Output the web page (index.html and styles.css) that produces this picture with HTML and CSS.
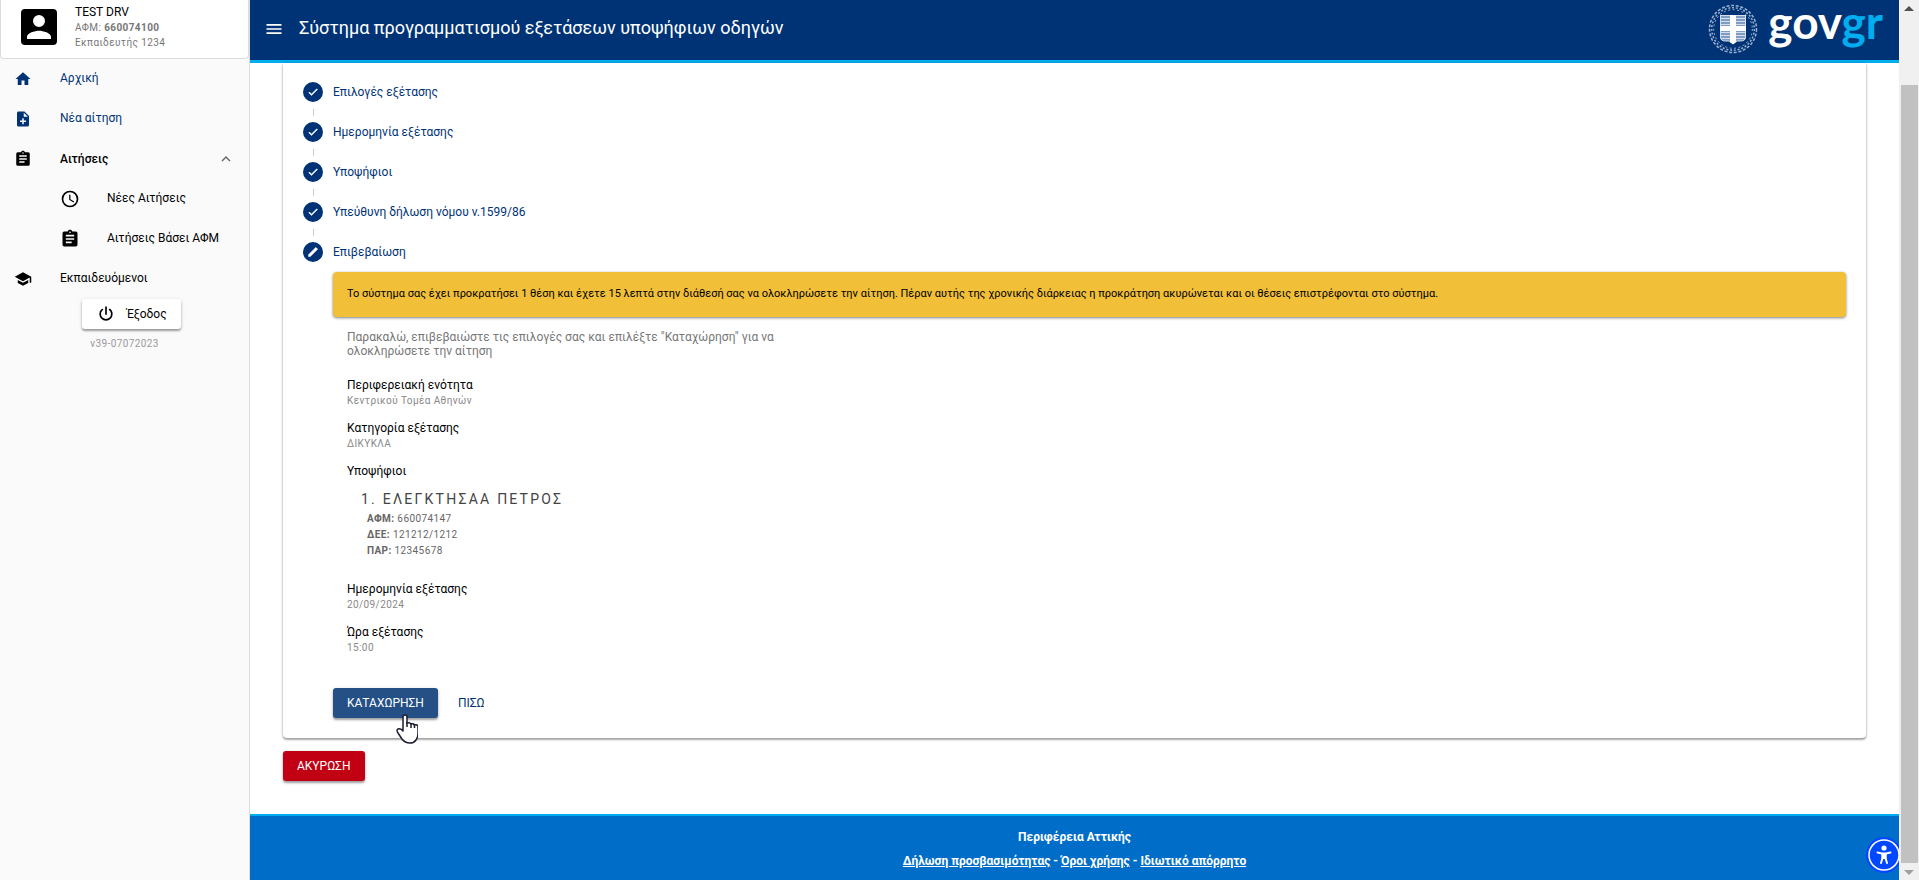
FILE: index.html
```html
<!DOCTYPE html>
<html lang="el">
    <head>
        <meta charset="utf-8">
        <title>Σύστημα προγραμματισμού εξετάσεων υποψήφιων οδηγών</title>
        <link rel="stylesheet" href="styles.css">
    </head>
    <body>
        <!-- shared icons -->
        <svg class="iconDefs" aria-hidden="true">
            <symbol id="check" viewBox="0 0 24 24"><path d="M21 7L9 19l-5.500-5.500 1.410-1.410L9 16.170 19.590 5.590z"/></symbol>
            <symbol id="clipboard" viewBox="0 0 24 24"><path d="M17 9H7V7h10m0 6H7v-2h10m-3 6H7v-2h7M12 3a1 1 0 0 1 1 1 1 1 0 0 1-1 1 1 1 0 0 1-1-1 1 1 0 0 1 1-1m7 0h-4.180C14.400 1.840 13.300 1 12 1s-2.400.84-2.820 2H5a2 2 0 0 0-2 2v14a2 2 0 0 0 2 2h14a2 2 0 0 0 2-2V5a2 2 0 0 0-2-2z"/></symbol>
        </svg>

        <aside class="sidebar">
            <div class="userCard">
                <svg class="avatar" viewBox="0 0 24 24"><path d="M6 17c0-2 4-3.100 6-3.100s6 1.100 6 3.100v1H6m9-9a3 3 0 0 1-3 3 3 3 0 0 1-3-3 3 3 0 0 1 3-3 3 3 0 0 1 3 3M3 5v14a2 2 0 0 0 2 2h14a2 2 0 0 0 2-2V5a2 2 0 0 0-2-2H5a2 2 0 0 0-2 2z"/></svg>
                <div>
                    <div class="userName">TEST DRV</div>
                    <div class="caption">ΑΦΜ: <b>660074100</b></div>
                    <div class="caption">Εκπαιδευτής 1234</div>
                </div>
            </div>

            <nav class="menu">
                <a href="#" class="menuItem blue">
                    <svg viewBox="0 0 24 24"><path d="M10 20v-6h4v6h5v-8h3L12 3 2 12h3v8z"/></svg>
                    <span>Αρχική</span>
                </a>
                <a href="#" class="menuItem blue">
                    <svg viewBox="0 0 24 24"><path d="M13 9h5.500L13 3.500V9M6 2h8l6 6v12a2 2 0 0 1-2 2H6a2 2 0 0 1-2-2V4c0-1.110.89-2 2-2m5 9v3H8v2h3v3h2v-3h3v-2h-3v-3z"/></svg>
                    <span>Νέα αίτηση</span>
                </a>
                <a href="#" class="menuItem group">
                    <svg viewBox="0 0 24 24"><use href="#clipboard"/></svg>
                    <span>Αιτήσεις</span>
                    <svg class="chevron" viewBox="0 0 24 24"><path d="M7.410 15.410L12 10.830l4.590 4.580L18 14l-6-6-6 6z"/></svg>
                </a>
                <a href="#" class="menuItem sub">
                    <svg viewBox="0 0 24 24"><path d="M12 20a8 8 0 0 0 8-8 8 8 0 0 0-8-8 8 8 0 0 0-8 8 8 8 0 0 0 8 8m0-18a10 10 0 0 1 10 10 10 10 0 0 1-10 10A10 10 0 0 1 2 12 10 10 0 0 1 12 2m.5 5v5.250l4.500 2.670-.75 1.230L11 13V7z"/></svg>
                    <span>Νέες Αιτήσεις</span>
                </a>
                <a href="#" class="menuItem sub">
                    <svg viewBox="0 0 24 24"><use href="#clipboard"/></svg>
                    <span>Αιτήσεις Βάσει ΑΦΜ</span>
                </a>
                <a href="#" class="menuItem">
                    <svg viewBox="0 0 24 24"><path d="M12 3L1 9l11 6 9-4.910V17h2V9M5 13.180v4L12 21l7-3.820v-4L12 17z"/></svg>
                    <span>Εκπαιδευόμενοι</span>
                </a>
            </nav>

            <div class="logout">
                <button type="button" class="btn logoutBtn">
                    <svg viewBox="0 0 24 24"><path d="M16.560 5.440l-1.450 1.450A5.970 5.970 0 0 1 18 12a6 6 0 0 1-6 6 6 6 0 0 1-6-6c0-2.170 1.160-4.060 2.880-5.120L7.440 5.440A7.960 7.960 0 0 0 4 12a8 8 0 0 0 8 8 8 8 0 0 0 8-8c0-2.720-1.360-5.120-3.440-6.560M13 3h-2v10h2"/></svg>
                    Έξοδος
                </button>
                <div class="version">v39-07072023</div>
            </div>
        </aside>

        <div class="page">
            <header class="topBar">
                <button type="button" class="burger" aria-label="Μενού">
                    <svg viewBox="0 0 24 24"><path d="M3 6h18v2H3V6m0 5h18v2H3v-2m0 5h18v2H3z"/></svg>
                </button>
                <h1>Σύστημα προγραμματισμού εξετάσεων υποψήφιων οδηγών</h1>
                <a href="#" class="logo">
                    <svg class="emblem" viewBox="0 0 50 50">
                        <g fill="none" stroke="#9db2d0">
                            <circle cx="25" cy="25" r="23.500" stroke-width="1.500" stroke-dasharray="3 1.700"/>
                            <circle cx="25" cy="25" r="21.300" stroke-width="1.500" stroke-dasharray="2 1.800"/>
                            <circle cx="25" cy="25" r="19.300" stroke-width="1" stroke-dasharray="2 2.500"/>
                        </g>
                        <path fill="#7f9dc4" d="M12 11h26v22q0 4-5 4h-4l-4 3-4-3h-4q-5 0-5-4z"/>
                        <path stroke="#d5deea" fill="none" d="M12 11.500h26M12 14.500h26M12 17.500h26M12 20.500h26M12 28.500h26M12 31.500h26M13 34.500h24M12.500 11v22q0 4 5 4h3.500l4 3 4-3h3.500q5 0 5-4V11"/>
                        <path fill="#fff" d="M22 11h6v11h10v5H28v11l-3 2-3-2V27H12v-5h10z"/>
                    </svg>
                    <span class="wordmark">gov<span>gr</span></span>
                </a>
            </header>

            <main class="content">
                <section class="card">
                    <ol class="steps">
                        <li><span class="dot"><svg viewBox="0 0 24 24"><use href="#check"/></svg></span>Επιλογές εξέτασης</li>
                        <li><span class="dot"><svg viewBox="0 0 24 24"><use href="#check"/></svg></span>Ημερομηνία εξέτασης</li>
                        <li><span class="dot"><svg viewBox="0 0 24 24"><use href="#check"/></svg></span>Υποψήφιοι</li>
                        <li><span class="dot"><svg viewBox="0 0 24 24"><use href="#check"/></svg></span>Υπεύθυνη δήλωση νόμου ν.1599/86</li>
                        <li><span class="dot"><svg viewBox="0 0 24 24"><path d="M20.710 7.040c.39-.39.39-1.040 0-1.410l-2.340-2.340c-.37-.39-1.020-.39-1.410 0L3 17.250V21h3.750z"/></svg></span>Επιβεβαίωση</li>
                    </ol>

                    <div class="stepBody">
                        <div class="notice">Το σύστημα σας έχει προκρατήσει 1 θέση και έχετε 15 λεπτά στην διάθεσή σας να ολοκληρώσετε την αίτηση. Πέραν αυτής της χρονικής διάρκειας η προκράτηση ακυρώνεται και οι θέσεις επιστρέφονται στο σύστημα.</div>

                        <div class="summary">
                            <p class="intro">Παρακαλώ, επιβεβαιώστε τις επιλογές σας και επιλέξτε "Καταχώρηση" για να ολοκληρώσετε την αίτηση</p>
                            <dl>
                                <dt>Περιφερειακή ενότητα</dt>
                                <dd>Κεντρικού Τομέα Αθηνών</dd>
                                <dt>Κατηγορία εξέτασης</dt>
                                <dd>ΔΙΚΥΚΛΑ</dd>
                                <dt>Υποψήφιοι</dt>
                                <dd class="candidate">
                                    <div class="candidateName">1. ΕΛΕΓΚΤΗΣΑΑ ΠΕΤΡΟΣ</div>
                                    <ul>
                                        <li><b>ΑΦΜ:</b> 660074147</li>
                                        <li><b>ΔΕΕ:</b> 121212/1212</li>
                                        <li><b>ΠΑΡ:</b> 12345678</li>
                                    </ul>
                                </dd>
                                <dt>Ημερομηνία εξέτασης</dt>
                                <dd>20/09/2024</dd>
                                <dt>Ώρα εξέτασης</dt>
                                <dd>15:00</dd>
                            </dl>
                        </div>

                        <div class="actions">
                            <button type="button" class="btn primary">ΚΑΤΑΧΩΡΗΣΗ
                                <svg class="cursor" viewBox="0 0 22 30"><path fill="#fff" stroke="#1c1c30" stroke-width="1.500" stroke-linejoin="round" d="M7 17V3q0-2 2-2t2 2v6q3-1 4 1 3-1 3 1 4-1 4 2v7q0 3-2 6-2 3-6 3-5 0-8-4l-4-6q-2-3 0-4 3-1 5 2z"/><path fill="none" stroke="#1c1c30" stroke-width="1.500" d="M11 8v5M15 9v5M18.500 10v4"/></svg>
                            </button>
                            <button type="button" class="btn flat">ΠΙΣΩ</button>
                        </div>
                    </div>
                </section>

                <button type="button" class="btn danger">ΑΚΥΡΩΣΗ</button>
            </main>

            <footer class="footer">
                <div>Περιφέρεια Αττικής</div>
                <div><a href="#">Δήλωση προσβασιμότητας</a> - <a href="#">Όροι χρήσης</a> - <a href="#">Ιδιωτικό απόρρητο</a></div>
                <button type="button" class="accessibility" aria-label="Προσβασιμότητα">
                    <svg viewBox="0 0 36 36"><circle cx="18" cy="18" r="18" fill="#0048ff"/><circle cx="18" cy="18" r="15" fill="none" stroke="#fff" stroke-width="1.500"/><circle cx="18" cy="11" r="2.600" fill="#fff"/><path fill="none" stroke="#fff" stroke-width="2" stroke-linecap="round" d="M11.500 15.500l4.500 1h4l4.500-1M16.500 17v4L15 26M19.500 17v4l1.500 5"/><path fill="#fff" d="M15.500 16h5v6h-5z"/></svg>
                </button>
            </footer>
        </div>

        <div class="scrollTrack" aria-hidden="true">
            <span class="arrow up"></span>
            <span class="thumb"></span>
            <span class="arrow down"></span>
        </div>
    </body>
</html>
```
FILE: styles.css
```css
*{
    box-sizing: border-box;
}

body{
    display: flex;
    min-height: 100vh;
    margin: 0;
    font-family: Roboto, "Liberation Sans", sans-serif;
    font-size: 12px;
    line-height: 14px;
    color: #000;
    background-color: #fff;
}

svg{
    display: block;
    flex: none;
    fill: currentColor;
}

ol, ul, dl, dd, p, h1{
    margin: 0;
    padding: 0;
    list-style: none;
}

button{
    font: inherit;
    border: 0;
    cursor: pointer;
}

.iconDefs{
    position: absolute;
    width: 0;
    height: 0;
}

/* sidebar */

.sidebar{
    flex: none;
    width: 250px;
    background-color: #fafafa;
    border-right: 1px solid #dcdcdc;
}

.userCard{
    display: flex;
    align-items: center;
    gap: 12px;
    height: 59px;
    padding: 0 14px 4px;
    background-color: #fff;
    border: 1px solid #dcdcdc;
    border-top: 0;
    border-radius: 0 0 4px 4px;
}

.avatar{
    width: 48px;
    height: 48px;
}

.userName{
    line-height: 16px;
}

.caption{
    font-size: 10px;
    line-height: 15px;
    letter-spacing: 0.04em;
    color: #777;
}

.menu{
    display: flex;
    flex-direction: column;
}

.menuItem{
    display: flex;
    align-items: center;
    gap: 28px;
    height: 40px;
    padding: 0 14px;
    color: #000;
    text-decoration: none;
}

.menuItem span{
    padding-bottom: 3px;
}

.menuItem svg{
    width: 18px;
    height: 18px;
}

.menuItem.blue{
    color: #003375;
}

.menuItem.group{
    font-weight: 500;
}

.menuItem.group span{
    padding-bottom: 0;
}

.menuItem.sub{
    gap: 27px;
    padding-left: 60px;
}

.menuItem.sub svg{
    width: 20px;
    height: 20px;
}

.menuItem .chevron{
    margin-left: auto;
    color: #666;
}

.btn{
    display: inline-flex;
    align-items: center;
    justify-content: center;
    height: 30px;
    padding: 0 14px;
    border-radius: 3px;
    box-shadow: 0 2px 2px rgba(0, 0, 0, 0.3), 0 1px 4px rgba(0, 0, 0, 0.15);
}

.logout{
    display: flex;
    flex-direction: column;
    align-items: center;
}

.logoutBtn{
    gap: 10px;
    margin-left: 14px;
    color: #000;
    background-color: #fff;
}

.logoutBtn svg{
    width: 20px;
    height: 20px;
}

.version{
    margin-top: 8px;
    font-size: 10px;
    letter-spacing: 0.04em;
    color: #999;
}

/* main column */

.page{
    display: flex;
    flex: 1;
    flex-direction: column;
    min-width: 0;
}

.topBar{
    display: flex;
    align-items: center;
    gap: 15px;
    height: 63px;
    padding: 0 16px 3px 14px;
    color: #fff;
    background-color: #003375;
    border-bottom: 3px solid #00aeef;
}

.burger{
    padding: 0;
    color: #fff;
    background: none;
}

.burger svg{
    width: 20px;
    height: 20px;
}

.topBar h1{
    padding-bottom: 1px;
    font-size: 18px;
    line-height: 24px;
    font-weight: 400;
}

.logo{
    display: flex;
    align-items: center;
    gap: 10px;
    margin-left: auto;
    color: #fff;
    text-decoration: none;
}

.emblem{
    width: 50px;
    height: 50px;
}

.wordmark{
    padding-bottom: 14px;
    font-family: Lato, sans-serif;
    font-size: 46px;
    line-height: 44px;
    font-weight: 700;
}

.wordmark span{
    color: #00aeef;
}

.content{
    flex: 1;
    padding: 0 33px;
}

.card{
    margin-bottom: 13px;
    padding: 9px 20px 20px;
    border-radius: 0 0 4px 4px;
    box-shadow: 0 2px 2px rgba(0, 0, 0, 0.3), 0 0 3px rgba(0, 0, 0, 0.25);
}

.steps li{
    position: relative;
    display: flex;
    align-items: center;
    gap: 10px;
    height: 40px;
    color: #003375;
}

/* connector between two steps */
.steps li + li::before{
    content: "";
    position: absolute;
    left: 10px;
    top: -3px;
    width: 1px;
    height: 7px;
    background-color: #ccc;
}

.dot{
    display: flex;
    align-items: center;
    justify-content: center;
    width: 20px;
    height: 20px;
    color: #fff;
    background-color: #003375;
    border-radius: 50%;
}

.dot svg{
    width: 12px;
    height: 12px;
    stroke: currentColor;
}

.stepBody{
    padding-left: 30px;
}

.notice{
    padding: 15px 14px 16px;
    font-size: 11px;
    background-color: #f1bf38;
    border-radius: 4px;
    box-shadow: 0 1px 3px rgba(0, 0, 0, 0.5);
}

.summary{
    padding: 13px 14px 0;
}

.intro{
    max-width: 440px;
    margin-bottom: 19px;
    color: #777;
}

.summary dt{
    line-height: 16px;
}

.summary dd{
    margin-bottom: 11px;
    font-size: 10px;
    line-height: 16px;
    letter-spacing: 0.04em;
    color: #888;
}

.summary .candidate{
    margin-bottom: 22px;
    padding: 10px 0 0 14px;
    color: #666;
}

.candidateName{
    font-size: 14px;
    line-height: 20px;
    letter-spacing: 0.16em;
    color: #444;
}

.candidate ul{
    padding: 2px 0 0 6px;
}

.actions{
    display: flex;
    gap: 6px;
    padding-top: 21px;
}

.btn.primary{
    position: relative;
    color: #fff;
    background-color: #245086;
}

.cursor{
    position: absolute;
    right: 20px;
    top: 26px;
    width: 22px;
    height: 30px;
}

.btn.flat{
    color: #003375;
    background: none;
    box-shadow: none;
}

.btn.danger{
    color: #fff;
    background-color: #c20013;
}

.footer{
    position: relative;
    display: flex;
    flex-direction: column;
    align-items: center;
    gap: 10px;
    height: 66px;
    padding-top: 14px;
    font-weight: 700;
    color: #fff;
    background-color: #006ec8;
    border-top: 2px solid #00aeef;
}

.footer a{
    color: #fff;
}

.accessibility{
    position: absolute;
    right: -3px;
    bottom: 7px;
    padding: 0;
    background: none;
}

.accessibility svg{
    width: 36px;
    height: 36px;
}

/* scrollbar */

.scrollTrack{
    z-index: 1;
    display: flex;
    flex: none;
    flex-direction: column;
    align-items: center;
    width: 20px;
    padding: 6px 0 5px;
    background-color: #f0f0f0;
}

.arrow{
    border: 5px solid transparent;
}

.arrow.up{
    margin-bottom: 74px;
    border-top: 0;
    border-bottom-color: #505050;
}

.arrow.down{
    margin-top: 7px;
    border-bottom: 0;
    border-top-color: #a0a0a0;
}

.thumb{
    flex: 1;
    width: 17px;
    background-color: #c1c1c1;
}
```
